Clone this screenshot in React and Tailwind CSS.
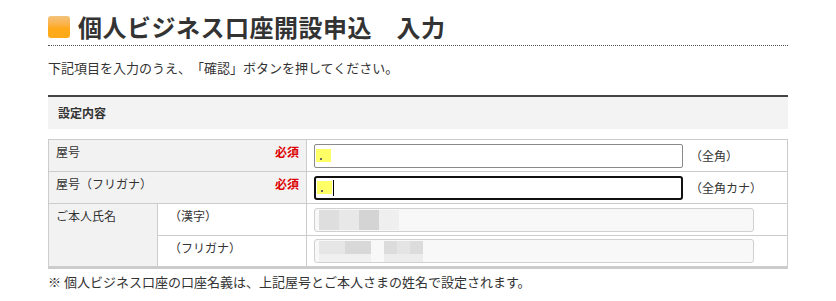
import React from 'react';

const FONT = { fontFamily: '"Noto Sans CJK JP", "Noto Sans", sans-serif' };

function Marker({ caret }) {
  return (
    <span className="flex items-center h-full">
      <span className="ml-[1px] flex h-[13px] w-[15px] items-end bg-[#ffff66] pb-[2px] pl-[4px]">
        <span className="block h-[2px] w-[2px] bg-[#666]" />
      </span>
      {caret && <span className="ml-[1px] block h-[16px] w-[1px] bg-black" />}
    </span>
  );
}

function Required() {
  return <span className="text-[12px] font-bold text-[#dd0000]">必須</span>;
}

export default function App() {
  return (
    <div className="w-[836px] h-[301px] overflow-hidden bg-white text-[#333] [text-spacing-trim:space-all]" style={FONT}>
      <div className="ml-[48px] w-[740px]">

        {/* Title */}
        <div className="flex items-center gap-[8px] pt-[14px] pb-[5px] border-b border-dotted border-[#555]">
          <span className="block h-[22px] w-[22px] rounded-[3px] bg-gradient-to-b from-[#f3c27a] to-[#ffaa1a] to-[55%]" />
          <h1 className="text-[24px] leading-[26px] font-bold tracking-[0.5px] text-[#333]">
            個人ビジネス口座開設申込　入力
          </h1>
        </div>

        {/* Lead */}
        <p className="mt-[13px] text-[13px] leading-[18px]">
          下記項目を入力のうえ、「確認」ボタンを押してください。
        </p>

        {/* Section header */}
        <div className="mt-[18px] h-[34px] border-t-2 border-[#444] bg-[#f3f3f3] pl-[10px] flex items-center">
          <span className="text-[12px] font-bold">設定内容</span>
        </div>

        {/* Form table */}
        <table className="mt-[10px] w-[740px] border-collapse text-[12px] border-b-[3px] border-b-[#cccccc]">
          <colgroup>
            <col className="w-[109px]" />
            <col className="w-[149px]" />
            <col />
          </colgroup>
          <tbody>
            <tr className="h-[32px]">
              <td colSpan={2} className="border border-[#cccccc] bg-[#f2f2f2] px-[7px] align-top pt-[3px]">
                <div className="flex items-center justify-between">
                  <span>屋号</span>
                  <Required />
                </div>
              </td>
              <td className="border border-[#cccccc] px-[7px]">
                <div className="flex items-center gap-[7px]">
                  <div className="h-[24px] w-[369px] rounded-[2px] border border-[#8a8a8a] bg-white">
                    <Marker />
                  </div>
                  <span>（全角）</span>
                </div>
              </td>
            </tr>
            <tr className="h-[32px]">
              <td colSpan={2} className="border border-[#cccccc] bg-[#f2f2f2] px-[7px] align-top pt-[3px]">
                <div className="flex items-center justify-between">
                  <span>屋号（フリガナ）</span>
                  <Required />
                </div>
              </td>
              <td className="border border-[#cccccc] px-[7px]">
                <div className="flex items-center gap-[7px]">
                  <div className="h-[24px] w-[369px] rounded-[3px] border-2 border-[#111] bg-white">
                    <Marker caret />
                  </div>
                  <span>（全角カナ）</span>
                </div>
              </td>
            </tr>
            <tr className="h-[32px]">
              <td rowSpan={2} className="border border-[#cccccc] bg-[#f2f2f2] px-[7px] align-top pt-[3px]">
                ご本人氏名
              </td>
              <td className="border border-[#cccccc] px-[11px] align-top pt-[3px]">（漢字）</td>
              <td className="border border-[#cccccc] px-[7px]">
                <div className="flex h-[24px] w-[440px] items-center rounded-[3px] border border-[#d0d0d0] bg-[#f8f8f8] pl-[4px]">
                  <span className="block h-[20px] w-[20px] bg-[#dedede]" />
                  <span className="block h-[20px] w-[20px] bg-[#e8e8e8]" />
                  <span className="block h-[20px] w-[20px] bg-[#d4d4d4]" />
                  <span className="block h-[20px] w-[20px] bg-[#efefef]" />
                </div>
              </td>
            </tr>
            <tr className="h-[32px]">
              <td className="border border-[#cccccc] px-[11px] align-top pt-[3px]">（フリガナ）</td>
              <td className="border border-[#cccccc] px-[7px]">
                <div className="flex h-[24px] w-[440px] items-start rounded-[3px] border border-[#d0d0d0] bg-[#f8f8f8] pl-[4px] pt-[1px]">
                  <div className="flex flex-col">
                    <div className="flex">
                      <span className="block h-[13px] w-[26px] bg-[#e6e6e6]" />
                      <span className="block h-[13px] w-[26px] bg-[#d8d8d8]" />
                    </div>
                    <span className="block h-[8px] w-[52px] bg-[#f0f0f0]" />
                  </div>
                  <div className="ml-[13px] flex flex-col">
                    <div className="flex">
                      <span className="block h-[13px] w-[13px] bg-[#dcdcdc]" />
                      <span className="block h-[13px] w-[13px] bg-[#e4e4e4]" />
                      <span className="block h-[13px] w-[13px] bg-[#dcdcdc]" />
                    </div>
                    <span className="block h-[8px] w-[39px] bg-[#ececec]" />
                  </div>
                </div>
              </td>
            </tr>
          </tbody>
        </table>

        <p className="mt-[4px] text-[13px] leading-[18px]">
          ※ 個人ビジネス口座の口座名義は、上記屋号とご本人さまの姓名で設定されます。
        </p>
      </div>
    </div>
  );
}
